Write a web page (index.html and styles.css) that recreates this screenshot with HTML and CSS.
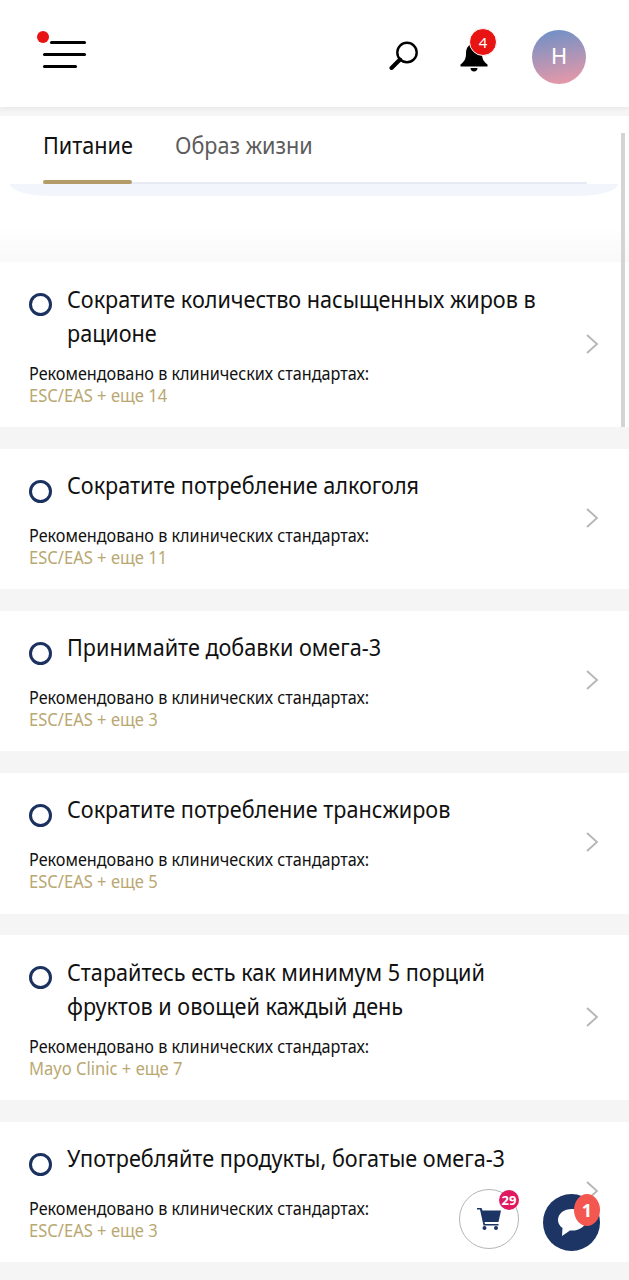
FILE: index.html
```html
<!DOCTYPE html>
<html lang="ru">

<head>
  <meta charset="UTF-8">
  <meta name="viewport" content="width=device-width, initial-scale=1.0">
  <link rel="stylesheet" href="styles.css">
  <title>Рекомендации</title>
</head>

<body>

  <header class="top-bar">
    <button class="menu-btn" aria-label="Меню">
      <span class="menu-dot"></span>
      <span class="menu-line line-top"></span>
      <span class="menu-line"></span>
      <span class="menu-line line-bottom"></span>
    </button>
    <div class="top-actions">
      <svg class="search-icon" width="30" height="30" viewBox="0 0 30 30" fill="none" stroke="#000">
        <circle cx="18" cy="11.500" r="9.700" stroke-width="2.400" />
        <path d="M11 18.500L2.500 27" stroke-width="4" stroke-linecap="round" />
      </svg>
      <div class="bell">
        <svg width="28" height="30" viewBox="0 0 28 30" fill="#000">
          <path d="M14 1c-5.500 0-8 4-8 9.500 0 5.500-2 8.500-5.500 11v2h27v-2c-3.500-2.500-5.500-5.500-5.500-11C22 5 19.500 1 14 1z" />
          <path d="M10.500 25h7c0 2-1.500 3.500-3.500 3.500s-3.500-1.500-3.500-3.500z" />
        </svg>
        <span class="bell-count">4</span>
      </div>
      <div class="avatar">H</div>
    </div>
  </header>

  <nav class="tabs">
    <div class="tab-row">
      <a class="tab tab-active"><span>Питание</span></a>
      <a class="tab tab-other"><span>Образ жизни</span></a>
    </div>
    <div class="tab-curve"></div>
  </nav>

  <main class="list">
    <article class="card card-tall">
      <div class="card-head">
        <span class="circle"></span>
        <h2>Сократите количество насыщенных жиров в рационе</h2>
      </div>
      <p class="rec">Рекомендовано в клинических стандартах:</p>
      <p class="source">ESC/EAS + еще 14</p>
      <svg class="chevron" width="14" height="22" viewBox="0 0 14 22"><path d="M2 2l10 9-10 9" /></svg>
    </article>

    <article class="card">
      <div class="card-head">
        <span class="circle"></span>
        <h2>Сократите потребление алкоголя</h2>
      </div>
      <p class="rec">Рекомендовано в клинических стандартах:</p>
      <p class="source">ESC/EAS + еще 11</p>
      <svg class="chevron" width="14" height="22" viewBox="0 0 14 22"><path d="M2 2l10 9-10 9" /></svg>
    </article>

    <article class="card">
      <div class="card-head">
        <span class="circle"></span>
        <h2>Принимайте добавки омега-3</h2>
      </div>
      <p class="rec">Рекомендовано в клинических стандартах:</p>
      <p class="source">ESC/EAS + еще 3</p>
      <svg class="chevron" width="14" height="22" viewBox="0 0 14 22"><path d="M2 2l10 9-10 9" /></svg>
    </article>

    <article class="card">
      <div class="card-head">
        <span class="circle"></span>
        <h2>Сократите потребление трансжиров</h2>
      </div>
      <p class="rec">Рекомендовано в клинических стандартах:</p>
      <p class="source">ESC/EAS + еще 5</p>
      <svg class="chevron" width="14" height="22" viewBox="0 0 14 22"><path d="M2 2l10 9-10 9" /></svg>
    </article>

    <article class="card card-tall">
      <div class="card-head">
        <span class="circle"></span>
        <h2>Старайтесь есть как минимум 5 порций фруктов и овощей каждый день</h2>
      </div>
      <p class="rec">Рекомендовано в клинических стандартах:</p>
      <p class="source">Mayo Clinic + еще 7</p>
      <svg class="chevron" width="14" height="22" viewBox="0 0 14 22"><path d="M2 2l10 9-10 9" /></svg>
    </article>

    <article class="card">
      <div class="card-head">
        <span class="circle"></span>
        <h2>Употребляйте продукты, богатые омега-3</h2>
      </div>
      <p class="rec">Рекомендовано в клинических стандартах:</p>
      <p class="source">ESC/EAS + еще 3</p>
      <svg class="chevron" width="14" height="22" viewBox="0 0 14 22"><path d="M2 2l10 9-10 9" /></svg>
    </article>
  </main>

  <div class="scrollbar"></div>

  <div class="cart-fab">
    <svg width="24" height="22" viewBox="0 0 24 22" fill="#1c3564">
      <path d="M0 0h4.500l1 2.500H24l-2.500 11.500H7.500l.5 2h13.500v1.500H6.500L3 1.600H0z" />
      <circle cx="7.500" cy="20" r="2" />
      <circle cx="19" cy="20" r="2" />
    </svg>
    <span class="cart-count">29</span>
  </div>

  <div class="chat-fab">
    <svg width="30" height="29" viewBox="0 0 30 29" fill="#fff">
      <path d="M15 1C7 1 1 5.500 1 12c0 3.500 1.800 6 4.500 8L5 28l8-5.500c.7.100 1.300.100 2 .100 8 0 14-4.500 14-10.600S23 1 15 1z" />
    </svg>
    <span class="chat-count">1</span>
  </div>

</body>

</html>
```

FILE: styles.css
```css
body {
  margin: 0;
  background-color: #f5f5f5;
  font-family: "Noto Sans", "Open Sans", sans-serif;
  color: #111;
  height: 1280px;
  overflow: hidden;
  position: relative;
}

.top-bar {
  display: flex;
  align-items: center;
  justify-content: space-between;
  height: 107px;
  padding: 4px 43px 0;
  background-color: #fff;
  box-shadow: 0 2px 5px rgba(0, 0, 0, 0.05);
  box-sizing: border-box;
  position: relative;
}

.menu-btn {
  display: flex;
  flex-direction: column;
  gap: 9px;
  align-items: flex-end;
  width: 43px;
  padding: 0;
  border: 0;
  background: none;
  position: relative;
  margin-top: -3px;
}

.menu-line {
  display: block;
  width: 43px;
  height: 3px;
  border-radius: 2px;
  background-color: #000;
}

.line-top {
  width: 36px;
}

.line-bottom {
  width: 34px;
  align-self: flex-start;
}

.menu-dot {
  position: absolute;
  left: -6px;
  top: -10px;
  width: 12px;
  height: 12px;
  border-radius: 50%;
  background-color: #e81313;
}

.top-actions {
  display: flex;
  align-items: center;
}

.search-icon {
  margin-right: 41px;
}

.bell {
  position: relative;
  width: 28px;
  height: 30px;
  margin-right: 44px;
  margin-top: 4px;
}

.bell-count {
  position: absolute;
  left: 9px;
  top: -15px;
  width: 26px;
  height: 26px;
  line-height: 26px;
  border-radius: 50%;
  border: 1px solid #fff;
  background-color: #e81313;
  color: #fff;
  font-size: 15px;
  text-align: center;
}

.avatar {
  width: 54px;
  height: 54px;
  line-height: 54px;
  margin-top: 2px;
  border-radius: 50%;
  background: linear-gradient(170deg, #6a90c8, #ee99a6);
  color: #fff;
  font-family: Roboto, sans-serif;
  font-size: 22px;
  text-align: center;
}

.tabs {
  height: 146px;
  margin-top: 9px;
  background: linear-gradient(#fff 75%, #f9f9f9);
}

.tab-row {
  display: flex;
  gap: 43px;
  height: 68px;
  margin: 0 42px 0 43px;
  position: relative;
}

.tab-row::after {
  content: "";
  position: absolute;
  left: 0;
  right: 0;
  bottom: 0;
  height: 2px;
  background-color: #e6ebf3;
}

.tab {
  font-size: 24px;
  line-height: 58px;
  color: #5c5c5c;
  position: relative;
  white-space: nowrap;
}

.tab span {
  display: block;
  transform: scaleX(0.9);
  transform-origin: left;
}

.tab-active {
  color: #111;
  width: 89px;
}

.tab-other {
  width: 137px;
}

.tab-active::after {
  content: "";
  position: absolute;
  left: 0;
  right: 0;
  bottom: 0;
  height: 4px;
  border-radius: 2px;
  background-color: #b39c68;
  z-index: 1;
}

.tab-curve {
  height: 12px;
  margin: 0 11px 0 10px;
  background-color: #f2f6fc;
  border-radius: 0 0 40px 40px / 0 0 12px 12px;
}

.list {
  display: flex;
  flex-direction: column;
  gap: 21.600px;
}

.card {
  height: 140.600px;
  padding: 19.500px 0 0 29px;
  background-color: #fff;
  box-sizing: border-box;
  position: relative;
}

.card-tall {
  height: 165px;
}

.card-head {
  display: flex;
  gap: 15px;
  min-height: 43.500px;
  margin-bottom: 12px;
}

.circle {
  flex: none;
  width: 23px;
  height: 23px;
  margin-top: 11.500px;
  border: 3px solid #1b3160;
  border-radius: 50%;
  box-sizing: border-box;
}

h2 {
  width: 536px;
  margin: 0;
  font-size: 24px;
  font-weight: 400;
  line-height: 34px;
  transform: scaleX(0.9);
  transform-origin: left;
}

.rec,
.source {
  margin: 0;
  font-size: 18px;
  line-height: 22px;
  white-space: nowrap;
  transform: scaleX(0.9);
  transform-origin: left;
}

.source {
  color: #b9a872;
  transform: scaleX(0.92);
}

.chevron {
  position: absolute;
  right: 30px;
  top: 50%;
  margin-top: -12px;
  fill: none;
  stroke: #b5b5b5;
  stroke-width: 1.800;
}

.scrollbar {
  position: absolute;
  left: 621px;
  top: 133px;
  width: 4px;
  height: 294px;
  background-color: #d4d4d4;
}

.cart-fab {
  position: absolute;
  left: 459px;
  top: 1189px;
  width: 60px;
  height: 60px;
  border: 1px solid #b5b5b5;
  border-radius: 50%;
  box-sizing: border-box;
  background-color: #fff;
  display: flex;
  align-items: center;
  justify-content: center;
}

.cart-count {
  position: absolute;
  left: 39px;
  top: 0;
  width: 20px;
  height: 20px;
  line-height: 20px;
  border-radius: 50%;
  background-color: #e0185f;
  color: #fff;
  font-size: 13px;
  font-weight: 700;
  text-align: center;
}

.chat-fab {
  position: absolute;
  left: 543px;
  top: 1194px;
  width: 57px;
  height: 57px;
  border-radius: 50%;
  background-color: #1c3564;
  display: flex;
  align-items: center;
  justify-content: center;
}

.chat-count {
  position: absolute;
  left: 31px;
  top: 0;
  width: 26px;
  height: 32px;
  line-height: 32px;
  border-radius: 50%;
  background-color: #f4574f;
  color: #fff;
  font-size: 18px;
  font-weight: 700;
  text-align: center;
}
```
